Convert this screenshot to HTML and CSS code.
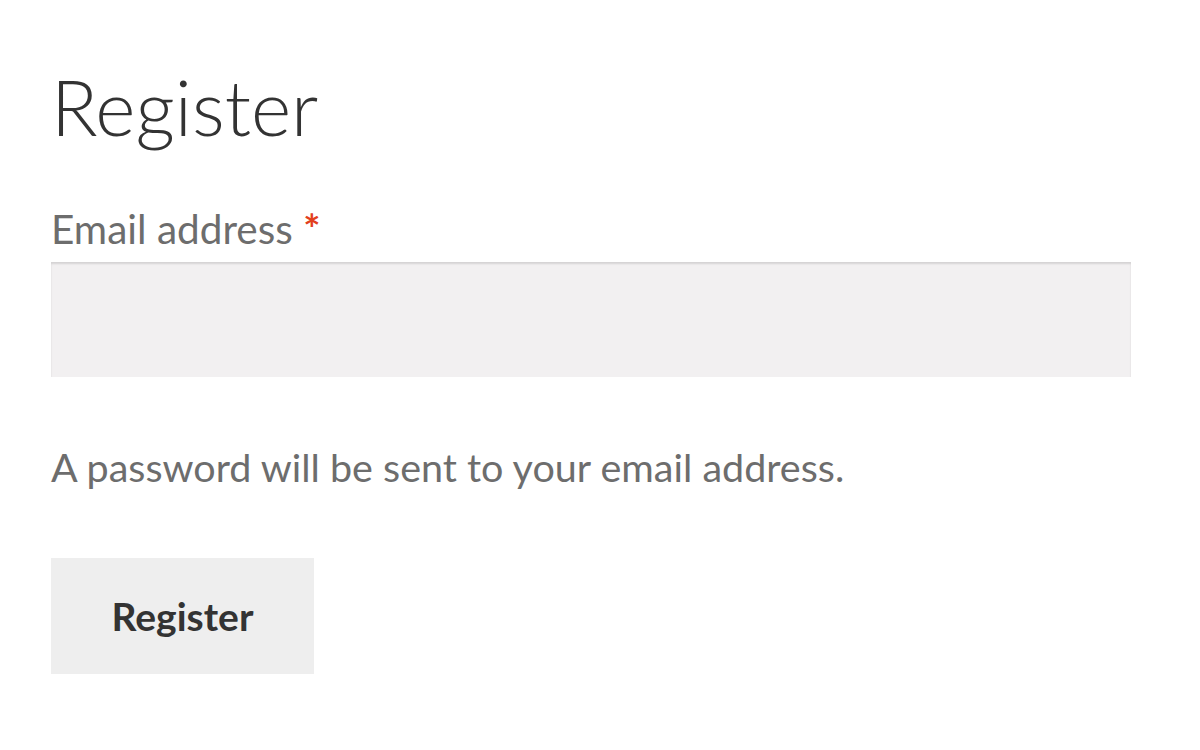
FILE: index.html
```html
<!DOCTYPE html>
<html lang="en">
<head>
<meta charset="utf-8">
<title>Register</title>
<link rel="stylesheet" href="styles.css">
</head>
<body>
<main class="page">
  <h1 class="title">Register</h1>
  <form class="form">
    <label class="label" for="email">Email address <span class="req">*</span></label>
    <input class="input" id="email" type="email">
    <p class="note">A password will be sent to your email address.</p>
    <button class="btn" type="button">Register</button>
  </form>
</main>
</body>
</html>
```

FILE: styles.css
```css
html, body {
  margin: 0;
  padding: 0;
  background: #ffffff;
}
body {
  font-family: Lato, "Liberation Sans", sans-serif;
  color: #6d6d6d;
}
.page {
  padding: 56px 69px 0 51px;
}
.title {
  margin: 0;
  font-size: 77px;
  font-weight: 300;
  line-height: 100px;
  color: #333333;
}
.form {
  display: flex;
  flex-direction: column;
  align-items: flex-start;
  margin-top: 50px;
}
.label {
  font-size: 40.5px;
  line-height: 46px;
  color: #6d6d6d;
}
.req {
  color: #e2401c;
  font-weight: 700;
}
.input {
  box-sizing: border-box;
  align-self: stretch;
  height: 115px;
  margin: 10px 0 0;
  border: 0;
  background: #f2f0f1;
  box-shadow: inset 0 2px 2px rgba(0, 0, 0, 0.12);
  outline: none;
}
.note {
  margin: 67px 0 0;
  font-size: 39.5px;
  line-height: 46px;
}
.btn {
  margin-top: 68px;
  width: 263px;
  height: 116px;
  border: 0;
  background: #eeeeee;
  font-family: Lato, "Liberation Sans", sans-serif;
  font-weight: 700;
  font-size: 39px;
  color: #333333;
  padding: 0;
}
```
